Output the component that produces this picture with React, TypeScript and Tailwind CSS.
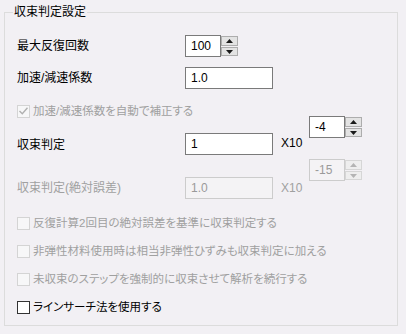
import React from "react";

const font = {
  fontFamily: '"Liberation Sans", "Noto Sans CJK JP", sans-serif',
};

function Arrow({ up, disabled }: { up?: boolean; disabled?: boolean }) {
  return (
    <svg width="7" height="4" viewBox="0 0 7 4">
      <path
        d={up ? "M0 4 L3.5 0 L7 4 Z" : "M0 0 L3.5 4 L7 0 Z"}
        fill={disabled ? "#b4b4b4" : "#1a1a1a"}
      />
    </svg>
  );
}

function SpinBox({ value, disabled }: { value: string; disabled?: boolean }) {
  const btn = disabled
    ? "border-[#d6d6d6] bg-[#eeeeee]"
    : "border-[#adadad] bg-[#e3e3e3]";
  return (
    <div className="flex h-[22px] w-[53px]">
      <div
        className={`flex w-[36px] items-center border pl-[5px] text-[12px] ${
          disabled
            ? "border-[#cccccc] bg-[#f4f3f5] text-[#9a9a9a]"
            : "border-[#7a7a7a] bg-white text-black"
        }`}
      >
        {value}
      </div>
      <div className="flex w-[17px] flex-col gap-[1px] py-[1px]">
        <div className={`flex h-[10px] items-center justify-center border ${btn}`}>
          <Arrow up disabled={disabled} />
        </div>
        <div className={`flex h-[9px] items-center justify-center border ${btn}`}>
          <Arrow disabled={disabled} />
        </div>
      </div>
    </div>
  );
}

function TextBox({ value, disabled }: { value: string; disabled?: boolean }) {
  return (
    <div
      className={`flex h-[22px] w-[88px] items-center border pl-[5px] text-[12px] ${
        disabled
          ? "border-[#cccccc] bg-[#f4f3f5] text-[#9a9a9a]"
          : "border-[#7a7a7a] bg-white text-black"
      }`}
    >
      {value}
    </div>
  );
}

function Check({
  label,
  disabled,
  checked,
}: {
  label: string;
  disabled?: boolean;
  checked?: boolean;
}) {
  return (
    <div className="flex h-[16px] items-center">
      <div
        className={`flex h-[13px] w-[13px] shrink-0 items-center justify-center border ${
          disabled ? "border-[#d4d4d4] bg-[#f7f7f8]" : "border-[#333333] bg-white"
        }`}
      >
        {checked && (
          <svg width="9" height="8" viewBox="0 0 9 8">
            <path d="M0.5 4 L3.3 6.8 L8.5 0.8" stroke="#b0b0b0" strokeWidth="1.4" fill="none" />
          </svg>
        )}
      </div>
      <span
        className={`ml-[3px] whitespace-nowrap text-[11.5px] leading-[16px] ${
          disabled ? "text-[#a0a0a0]" : "text-black"
        }`}
      >
        {label}
      </span>
    </div>
  );
}

export default function App() {
  return (
    <div
      className="h-[334px] w-[406px] bg-[#f2f0f4] pl-[4px] pr-[8px] pt-[12px] [font-feature-settings:'palt']"
      style={font}
    >
      <div className="h-[314px] border border-[#dcdcdc]">
        <div className="-mt-[9px] ml-[8px] w-fit bg-[#f2f0f4] px-[1px] text-[12px] leading-[16px] text-black">
          収束判定設定
        </div>

        <div className="pl-[12px]">
          {/* 最大反復回数 */}
          <div className="mt-[15px] flex h-[22px] items-center">
            <span className="w-[168px] text-[12px] text-black">最大反復回数</span>
            <SpinBox value="100" />
          </div>

          {/* 加速/減速係数 */}
          <div className="mt-[10px] flex h-[22px] items-center">
            <span className="w-[168px] text-[12px] text-black">加速/減速係数</span>
            <TextBox value="1.0" />
          </div>

          <div className="mt-[14px]">
            <Check label="加速/減速係数を自動で補正する" disabled checked />
          </div>

          {/* 収束判定 */}
          <div className="-mt-[3px] flex h-[39px] items-start">
            <span className="mt-[21px] w-[168px] text-[12px] leading-[16px] text-black">
              収束判定
            </span>
            <div className="mt-[17px]">
              <TextBox value="1" />
            </div>
            <span className="ml-[8px] mt-[19px] w-[28px] text-[12px] leading-[16px] text-black">
              X10
            </span>
            <SpinBox value="-4" />
          </div>

          {/* 収束判定(絶対誤差) */}
          <div className="mt-[4px] flex h-[40px] items-start">
            <span className="mt-[21px] w-[168px] text-[12px] leading-[16px] text-[#a0a0a0]">
              収束判定(絶対誤差)
            </span>
            <div className="mt-[18px]">
              <TextBox value="1.0" disabled />
            </div>
            <span className="ml-[8px] mt-[21px] w-[28px] text-[12px] leading-[16px] text-[#a0a0a0]">
              X10
            </span>
            <SpinBox value="-15" disabled />
          </div>

          <div className="mt-[16px] flex flex-col gap-[12px]">
            <Check label="反復計算2回目の絶対誤差を基準に収束判定する" disabled />
            <Check label="非弾性材料使用時は相当非弾性ひずみも収束判定に加える" disabled />
            <Check label="未収束のステップを強制的に収束させて解析を続行する" disabled />
            <Check label="ラインサーチ法を使用する" />
          </div>
        </div>
      </div>
    </div>
  );
}
